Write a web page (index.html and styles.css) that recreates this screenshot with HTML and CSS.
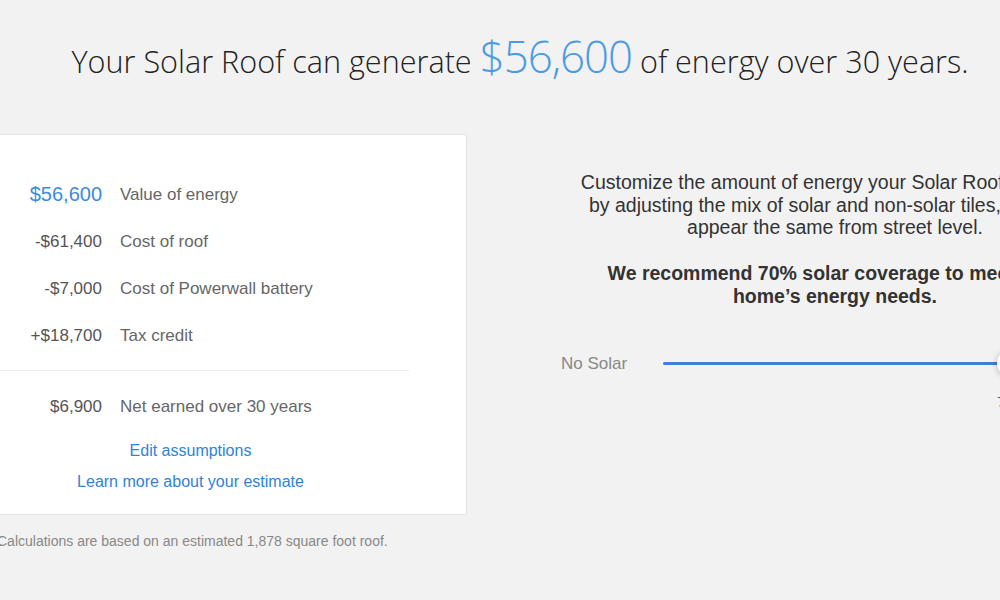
FILE: index.html
```html
<!DOCTYPE html>
<html lang="en">
<head>
  <meta charset="UTF-8">
  <title>Solar Roof Estimate</title>
  <link rel="stylesheet" href="styles.css">
</head>
<body>
  <div class="page">
    <h1 class="hero">Your Solar Roof can generate <span class="hero-amount">$56,600</span> of energy over 30 years.</h1>

    <div class="columns">
      <div class="left">
        <div class="card">
          <div class="row">
            <span class="amount amount-main">$56,600</span>
            <span class="label">Value of energy</span>
          </div>
          <div class="row">
            <span class="amount">-$61,400</span>
            <span class="label">Cost of roof</span>
          </div>
          <div class="row">
            <span class="amount">-$7,000</span>
            <span class="label">Cost of Powerwall battery</span>
          </div>
          <div class="row">
            <span class="amount">+$18,700</span>
            <span class="label">Tax credit</span>
          </div>
          <div class="divider"></div>
          <div class="row">
            <span class="amount">$6,900</span>
            <span class="label">Net earned over 30 years</span>
          </div>
          <div class="links">
            <a href="#">Edit assumptions</a>
            <a href="#">Learn more about your estimate</a>
          </div>
        </div>
        <p class="footnote">Calculations are based on an estimated 1,878 square foot roof.</p>
      </div>

      <div class="right">
        <p class="intro">Customize the amount of energy your Solar Roof produces<br>by adjusting the mix of solar and non-solar tiles, which all<br>appear the same from street level.</p>
        <p class="recommend">We recommend 70% solar coverage to meet your<br>home&rsquo;s energy needs.</p>
        <div class="slider">
          <span class="slider-label">No Solar</span>
          <div class="track">
            <div class="thumb"></div>
            <span class="thumb-value">70%</span>
          </div>
        </div>
      </div>
    </div>
  </div>
</body>
</html>
```

FILE: styles.css
```css
body {
  margin: 0;
  background-color: #f2f2f2;
  font-family: "Liberation Sans", Arial, sans-serif;
  overflow: hidden;
}

.page {
  width: 1040px;
}

.hero {
  margin: 0;
  padding-top: 30px;
  text-align: center;
  font-family: "Open Sans", sans-serif;
  font-weight: 300;
  font-size: 30.6px;
  line-height: 52px;
  color: #222;
}

.hero-amount {
  font-size: 43.8px;
  color: #4a9be6;
  letter-spacing: -1px;
}

.columns {
  display: flex;
  margin-top: 47px;
}

.left {
  width: 527px;
  margin-left: -60px;
  flex-shrink: 0;
}

.card {
  background-color: white;
  border: 1px solid #e4e4e4;
  border-radius: 3px;
  padding: 36px 57px 17px 61px;
}

.row {
  display: flex;
  align-items: center;
  height: 47px;
}

.amount {
  width: 100px;
  text-align: right;
  font-size: 17px;
  color: #555;
}

.amount-main {
  font-size: 20px;
  color: #3b8be0;
}

.label {
  margin-left: 18px;
  font-size: 17px;
  color: #666;
}

.divider {
  height: 1px;
  background-color: #ececec;
  margin: 11px 0 12px -61px;
}

.links {
  display: flex;
  flex-direction: column;
  align-items: center;
  padding-right: 30px;
  margin-top: 5px;
}

.links a {
  line-height: 31px;
  font-size: 16px;
  color: #2d84d8;
  text-decoration: none;
}

.footnote {
  margin: 18px 0 0 57px;
  font-size: 14px;
  color: #888;
}

.right {
  width: 550px;
  margin-left: 93px;
  flex-shrink: 0;
  padding-top: 37px;
}

.intro {
  margin: 0;
  text-align: center;
  font-size: 19.5px;
  line-height: 22.5px;
  color: #333;
}

.recommend {
  margin: 23px 0 0;
  text-align: center;
  font-size: 19.5px;
  font-weight: bold;
  line-height: 23px;
  color: #333;
}

.slider {
  display: flex;
  align-items: center;
  height: 24px;
  margin-top: 44px;
}

.slider-label {
  width: 102px;
  padding-left: 1px;
  font-size: 17px;
  color: #888;
}

.track {
  position: relative;
  width: 345px;
  height: 3px;
  border-radius: 2px;
  background-color: #3a82d8;
}

.thumb {
  position: absolute;
  left: 334px;
  top: -13px;
  width: 28px;
  height: 28px;
  border-radius: 50%;
  background-color: white;
  box-shadow: 0 1px 6px rgba(0, 0, 0, 0.25);
}

.thumb-value {
  position: absolute;
  left: 334px;
  top: 31px;
  font-size: 15px;
  color: #555;
}
```
